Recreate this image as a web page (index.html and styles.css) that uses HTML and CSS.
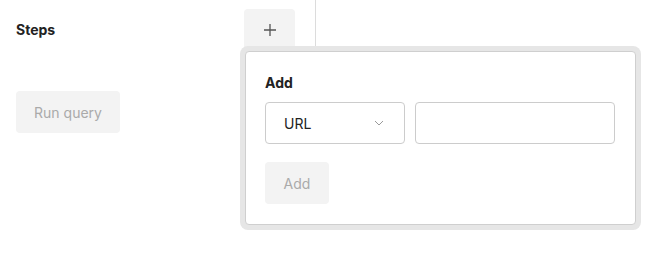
FILE: index.html
```html
<!DOCTYPE html>
<html lang="en">
<head>
    <meta charset="UTF-8">
    <meta name="viewport" content="width=device-width, initial-scale=1.0">
    <title>Steps</title>
    <link rel="stylesheet" href="styles.css">
</head>
<body>
    <div class="page">
        <div class="toolbar">
            <div class="title">Steps</div>
            <button class="icon-btn" aria-label="Add step">
                <svg width="12" height="12" viewBox="0 0 12 12">
                    <path d="M6 0 V12 M0 6 H12" stroke="#555" stroke-width="1.3" fill="none"/>
                </svg>
            </button>
            <div class="divider"></div>
        </div>

        <button class="btn run-btn" disabled>Run query</button>
    </div>

    <!-- popover opened by the + button -->
    <div class="popover">
        <div class="panel">
            <div class="panel-title">Add</div>
            <div class="fields">
                <div class="select">
                    <span>URL</span>
                    <svg width="10" height="6" viewBox="0 0 10 6">
                        <path d="M1 1 L5 5 L9 1" stroke="#9a9a9a" stroke-width="1" fill="none"/>
                    </svg>
                </div>
                <input type="text" class="text-input">
            </div>
            <button class="btn add-btn" disabled>Add</button>
        </div>
    </div>
</body>
</html>
```

FILE: styles.css
```css
body {
    margin: 0;
    font-family: Inter, "Noto Sans", sans-serif;
    font-size: 14px;
    color: #222;
    background: #fff;
}
.page {
    padding: 0 16px;
}
.toolbar {
    display: flex;
    align-items: flex-start;
    height: 60px;
}
.title {
    width: 228px;
    margin-top: 9px;
    line-height: 42px;
    font-weight: 700;
}
.icon-btn {
    width: 51px;
    height: 42px;
    margin-top: 9px;
    display: flex;
    align-items: center;
    justify-content: center;
    border: none;
    border-radius: 4px;
    background: #f3f3f3;
    padding: 0;
}
.divider {
    width: 1px;
    height: 56px;
    margin-left: 20px;
    background: #dcdcdc;
}
.btn {
    height: 42px;
    border: none;
    border-radius: 4px;
    background: #f3f3f3;
    color: #aaa;
    font-family: inherit;
    font-size: 14px;
}
.run-btn {
    width: 104px;
    margin-top: 31px;
}
.popover {
    position: absolute;
    left: 240px;
    top: 46px;
    width: 391px;
    padding: 5px;
    background: #e6e6e6;
    border-radius: 8px;
}
.panel {
    background: #fff;
    border: 1px solid #cfcfcf;
    border-radius: 4px;
    padding: 21px 20px 20px 19px;
}
.panel-title {
    font-weight: 700;
    line-height: 20px;
}
.fields {
    display: flex;
    gap: 10px;
    margin-top: 9px;
}
.select {
    box-sizing: border-box;
    width: 140px;
    height: 42px;
    display: flex;
    align-items: center;
    justify-content: space-between;
    padding: 0 20px 0 18px;
    border: 1px solid #ccc;
    border-radius: 4px;
}
.text-input {
    box-sizing: border-box;
    width: 200px;
    height: 42px;
    margin: 0;
    border: 1px solid #ccc;
    border-radius: 4px;
}
.add-btn {
    width: 64px;
    margin-top: 18px;
}
```
